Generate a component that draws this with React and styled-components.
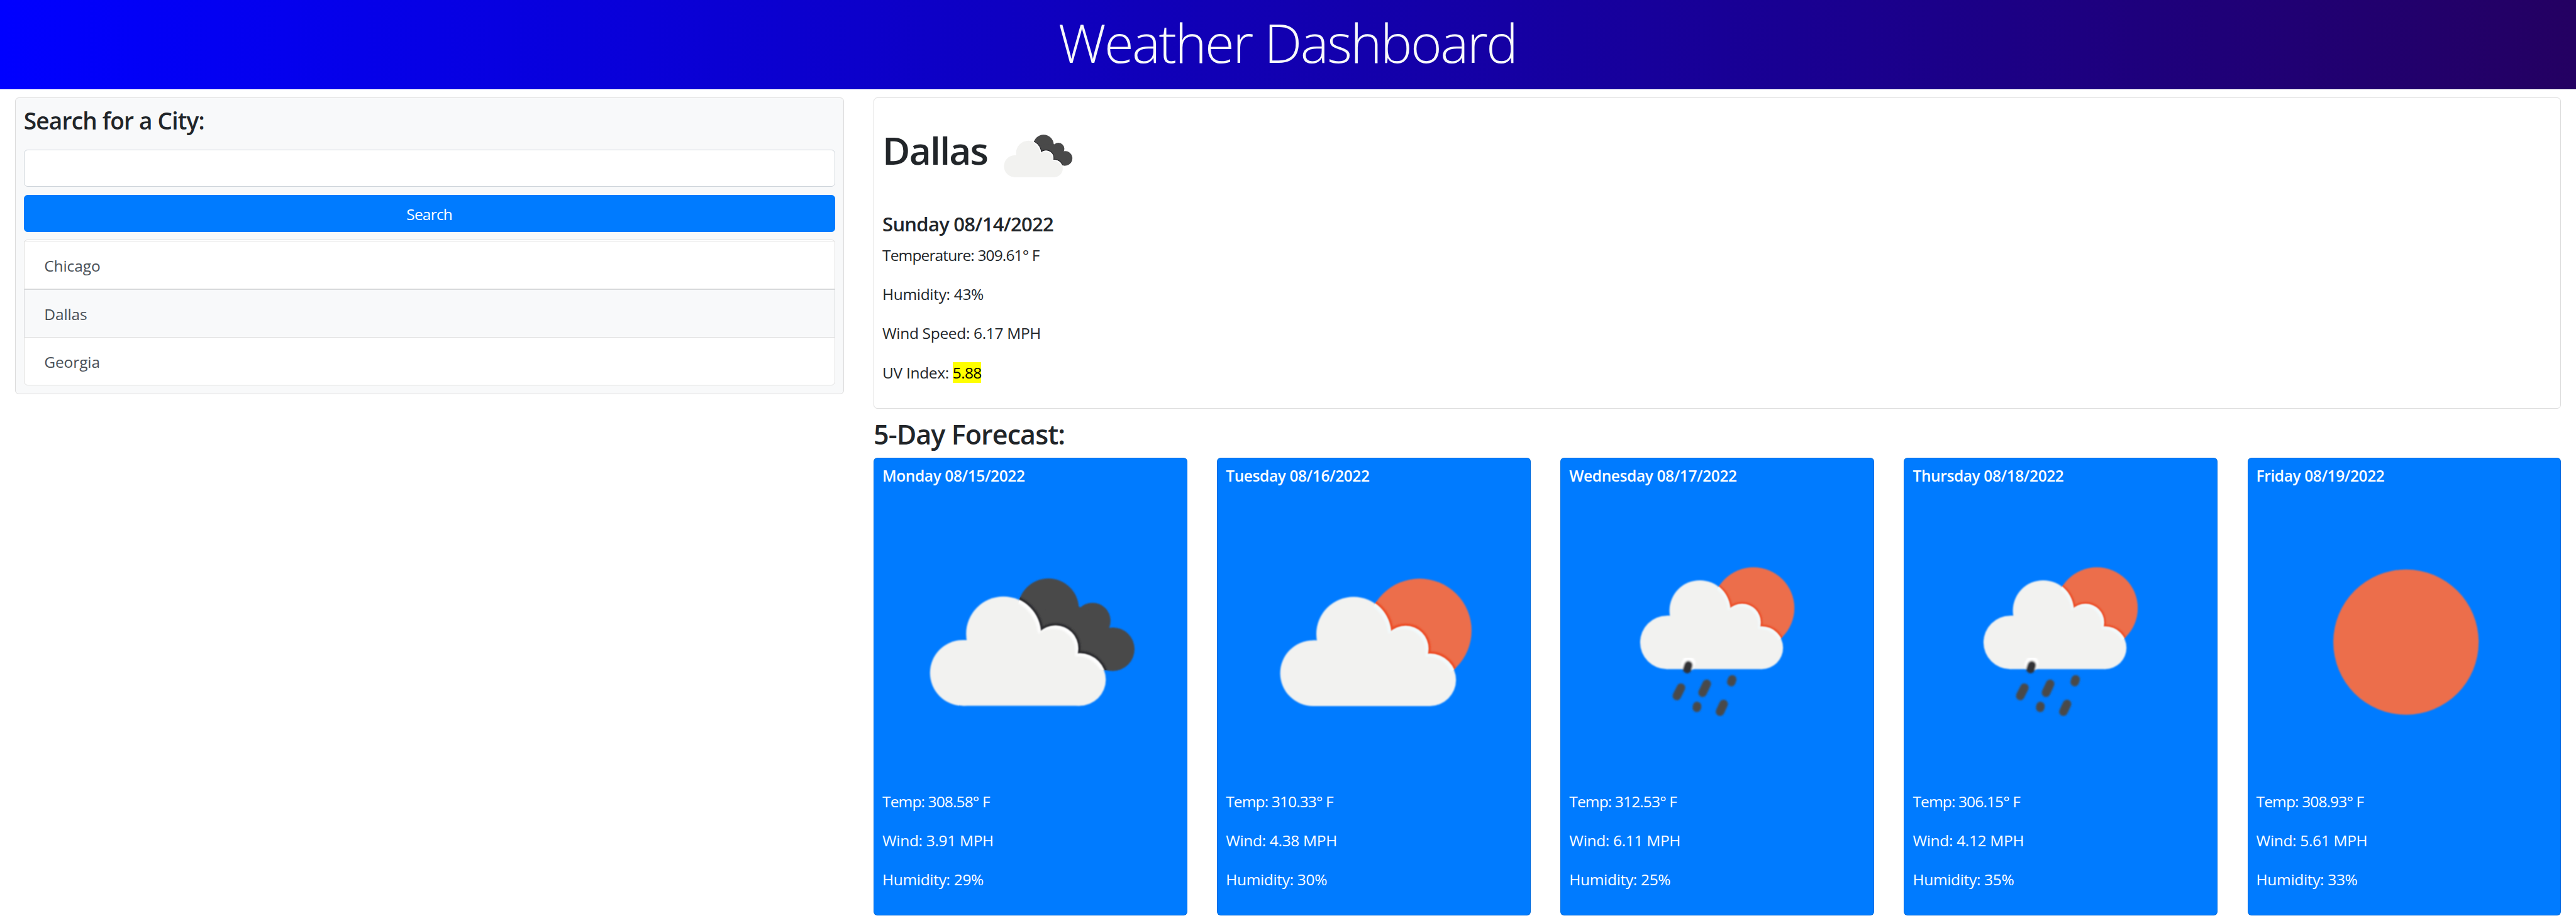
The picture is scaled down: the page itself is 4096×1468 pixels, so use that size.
import React from 'react';
import styled, { createGlobalStyle } from 'styled-components';

const GlobalStyle = createGlobalStyle`
  *, *::before, *::after { box-sizing: border-box; }
  body {
    margin: 0;
    background: #fff;
    color: #212529;
    font-family: 'Open Sans', 'Noto Sans', sans-serif;
    font-size: 24.5px;
    line-height: 38px;
  }
  h1, h2, h3, h4, h5, p, ul { margin: 0; padding: 0; }
`;

const Page = styled.div`
  min-height: 1468px;
  overflow: hidden;
`;

const Header = styled.header`
  height: 142.3px;
  background: linear-gradient(90deg, #0000ff, #240062);
  text-align: center;
`;

const Title = styled.h1`
  font-size: 85px;
  font-weight: 300;
  line-height: 134.6px;
  letter-spacing: -2.55px;
  padding-right: 2px;
  color: #f8f9fa;
`;

const Columns = styled.main`
  display: grid;
  grid-template-columns: 1fr 2fr;
  align-items: start;
  padding-top: 12.9px;
`;

const Column = styled.section`
  min-width: 0;
  padding: 0 23.75px;
`;

const Panel = styled.div`
  border: 1px solid #dcdcdc;
  border-radius: 6px;
  padding: 12.5px 13px 13px;
  background: ${(p) => (p.$muted ? '#f8f9fa' : '#fff')};
`;

const SearchTitle = styled.h4`
  font-size: 37px;
  font-weight: 600;
  line-height: 45px;
  letter-spacing: -0.8px;
  margin-bottom: 24px;
`;

const SearchInput = styled.input`
  display: block;
  width: 100%;
  height: 59px;
  padding: 0 19px;
  border: 1px solid #ced4da;
  border-radius: 6px;
  background: #fff;
  color: #495057;
  font: inherit;
`;

const SearchButton = styled.button`
  display: block;
  width: 100%;
  height: 59px;
  margin: 12.9px 0 12.6px;
  padding: 2px 0 0;
  border: 1px solid #007bff;
  border-radius: 6px;
  background: #007bff;
  color: #fff;
  font: inherit;
  line-height: 55px;
  letter-spacing: -0.8px;
`;

const CityList = styled.ul`
  list-style: none;
  border: 1px solid #dcdcdc;
  border-width: 1px 0 0;
  border-radius: 6px;
  padding-top: 1px;
  background: #fff;
`;

const City = styled.li`
  height: 77px;
  margin-top: ${(p) => (p.$first ? 0 : '-0.5px')};
  padding: 1px 31.5px 0;
  border: 1px solid ${(p) => (p.$active ? '#d6d8da' : '#dfdfdf')};
  border-bottom-left-radius: ${(p) => (p.$last ? '6px' : 0)};
  border-bottom-right-radius: ${(p) => (p.$last ? '6px' : 0)};
  background: ${(p) => (p.$active ? '#f8f9fa' : '#fff')};
  color: #495057;
  line-height: 75px;
  letter-spacing: -0.1px;
`;

const CityHeading = styled.div`
  display: flex;
  align-items: flex-start;
  height: 158.4px;
`;

const CityName = styled.h2`
  width: 167.8px;
  font-size: 60.5px;
  font-weight: 600;
  line-height: 140px;
  letter-spacing: -1.75px;
`;

const Today = styled.h5`
  margin: 9.9px 0 11.9px;
  font-size: 31px;
  font-weight: 600;
  letter-spacing: -0.73px;
`;

const Reading = styled.p`
  margin-bottom: 24.25px;
  letter-spacing: ${(p) => p.$track || -0.33}px;
`;

const UvBadge = styled.span`
  display: inline-block;
  width: 45.6px;
  height: 33px;
  line-height: 33px;
  background: #ffff00;
  color: #000;
  letter-spacing: -0.7px;
`;

const ForecastTitle = styled.h3`
  margin: 14.2px 0 10.6px;
  font-size: 43px;
  font-weight: 600;
  line-height: 53px;
  letter-spacing: -0.9px;
`;

const Forecast = styled.div`
  display: grid;
  grid-template-columns: repeat(5, 1fr);
  gap: 47.5px;
`;

const DayCard = styled.article`
  height: 728px;
  padding: 13px;
  border: 1px solid rgba(0, 0, 0, 0.125);
  border-radius: 6px;
  background: #007bff;
  color: #fff;
`;

const DayTitle = styled.h6`
  margin: 0 0 13.4px;
  font-size: 24.5px;
  font-weight: 600;
  line-height: 30px;
  letter-spacing: -0.4px;
`;

const IconBox = styled.svg`
  display: block;
  flex: none;
  width: ${(p) => p.$size};
  aspect-ratio: 1;
`;

const Circles = ({ list }) => list.map(([x, y, r]) => <circle key={x} cx={x} cy={y} r={r} />);

const CloudShape = () => (
  <>
    <Circles list={[[27.2, 60.5, 11.1], [40.9, 47.3, 12.6], [58.5, 52.2, 7.6], [66.7, 62.8, 8.8]]} />
    <path d="M27.2 49.4H41L58.5 48L66.7 56V71.6H27.2Z" />
  </>
);

const DarkShape = () => (
  <>
    <Circles list={[[56.1, 38.9, 10.3], [71, 42.9, 6.1], [77.85, 52.5, 7.35]]} />
    <path d="M48 40L66 38L72 40L79 52L77.85 59.85L62 58Z" />
  </>
);

const Drops = () => (
  <g stroke="#48484a" strokeWidth="2.9" strokeLinecap="round">
    <path d="M40.3 57.9L39.9 59.2" stroke="#303234" />
    <path d="M37.8 65.5L36.4 68.3M46.5 64.2L45.1 67.2M55.1 62.7L54.8 63.6M43.25 71.7L43.15 72.3M52.2 71L51 73.6" />
  </g>
);

function WeatherIcon({ kind, id, size = '100%' }) {
  const rain = kind === 'rain';
  const dark = kind === 'clouds';
  const moves = { clouds: '', partly: 'translate(2.3 0.1)', rain: 'translate(10.9 1) scale(0.813)' };
  const sun = rain ? [62.3, 38.6, 13.8] : [65.5, 46.2, 17.55];
  const back = dark ? <DarkShape /> : <Circles list={[sun]} />;
  if (kind === 'clear') {
    return (
      <IconBox $size={size} viewBox="0 0 100 100">
        <defs>
          <filter id={id + 's'}><feGaussianBlur stdDeviation="0.25" /></filter>
        </defs>
        <circle cx="50.5" cy="50.2" r="24.55" fill="#ec6e4c" filter={`url(#${id}s)`} />
      </IconBox>
    );
  }
  return (
    <IconBox $size={size} viewBox="0 -0.1 100 100">
      <defs>
        <filter id={id + 's'}><feGaussianBlur stdDeviation="0.25" /></filter>
        <filter id={id + 'g'}><feGaussianBlur stdDeviation="0.35" /></filter>
        <clipPath id={id + 'b'}>{back}</clipPath>
      </defs>
      <g fill={dark ? '#48484a' : '#ec6e4c'} filter={`url(#${id}s)`}>{back}</g>
      <g clipPath={`url(#${id}b)`}>
        <g transform={moves[kind]} fill="none" stroke={dark ? '#28282b' : '#ec4a24'} strokeWidth="1.7" filter={`url(#${id}g)`}>
          <CloudShape />
        </g>
      </g>
      <g transform={moves[kind]} fill="#f2f2f0" filter={`url(#${id}s)`}>
        <CloudShape />
      </g>
      <g clipPath={`url(#${id}b)`}>
        <g transform={moves[kind]} filter={`url(#${id}s)`}>
          <g fill={dark ? '#ffffff' : '#f2fbfd'}><CloudShape /></g>
          <g transform="translate(-0.8 0.8)" fill="#f2f2f0" filter={`url(#${id}g)`}><CloudShape /></g>
        </g>
      </g>
      {rain && (
        <g filter={`url(#${id}g)`}>
          <path d="M40.4 57.1L40.1 57.8" stroke="#fff" strokeWidth="4.4" strokeLinecap="round" />
          <Drops />
        </g>
      )}
    </IconBox>
  );
}

const cities = ['Chicago', 'Dallas', 'Georgia'];

const days = [
  { date: 'Monday 08/15/2022', kind: 'clouds', temp: '308.58', wind: '3.91', humidity: 29 },
  { date: 'Tuesday 08/16/2022', kind: 'partly', temp: '310.33', wind: '4.38', humidity: 30 },
  { date: 'Wednesday 08/17/2022', kind: 'rain', temp: '312.53', wind: '6.11', humidity: 25 },
  { date: 'Thursday 08/18/2022', kind: 'rain', temp: '306.15', wind: '4.12', humidity: 35 },
  { date: 'Friday 08/19/2022', kind: 'clear', temp: '308.93', wind: '5.61', humidity: 33 },
];

export default function App() {
  return (
    <Page>
      <GlobalStyle />
      <Header>
        <Title>Weather Dashboard</Title>
      </Header>
      <Columns>
        <Column>
          <Panel $muted>
            <SearchTitle>Search for a City:</SearchTitle>
            <SearchInput type="text" aria-label="City" />
            <SearchButton type="button">Search</SearchButton>
            <CityList>
              {cities.map((city, i) => (
                <City key={city} $first={i === 0} $last={i === cities.length - 1} $active={city === 'Dallas'}>
                  {city}
                </City>
              ))}
            </CityList>
          </Panel>
        </Column>
        <Column>
          <Panel>
            <CityHeading>
              <CityName>Dallas</CityName>
              <WeatherIcon kind="clouds" id="today" size="157.5px" />
            </CityHeading>
            <Today>Sunday 08/14/2022</Today>
            <Reading $track={-0.87}>Temperature: 309.61° F</Reading>
            <Reading>Humidity: 43%</Reading>
            <Reading>Wind Speed: 6.17 MPH</Reading>
            <Reading>UV Index: <UvBadge>5.88</UvBadge></Reading>
          </Panel>
          <ForecastTitle>5-Day Forecast:</ForecastTitle>
          <Forecast>
            {days.map((day, i) => (
              <DayCard key={day.date}>
                <DayTitle>{day.date}</DayTitle>
                <WeatherIcon kind={day.kind} id={`day${i}`} />
                <Reading $track={-0.87}>Temp: {day.temp}° F</Reading>
                <Reading>Wind: {day.wind} MPH</Reading>
                <Reading>Humidity: {day.humidity}%</Reading>
              </DayCard>
            ))}
          </Forecast>
        </Column>
      </Columns>
    </Page>
  );
}
